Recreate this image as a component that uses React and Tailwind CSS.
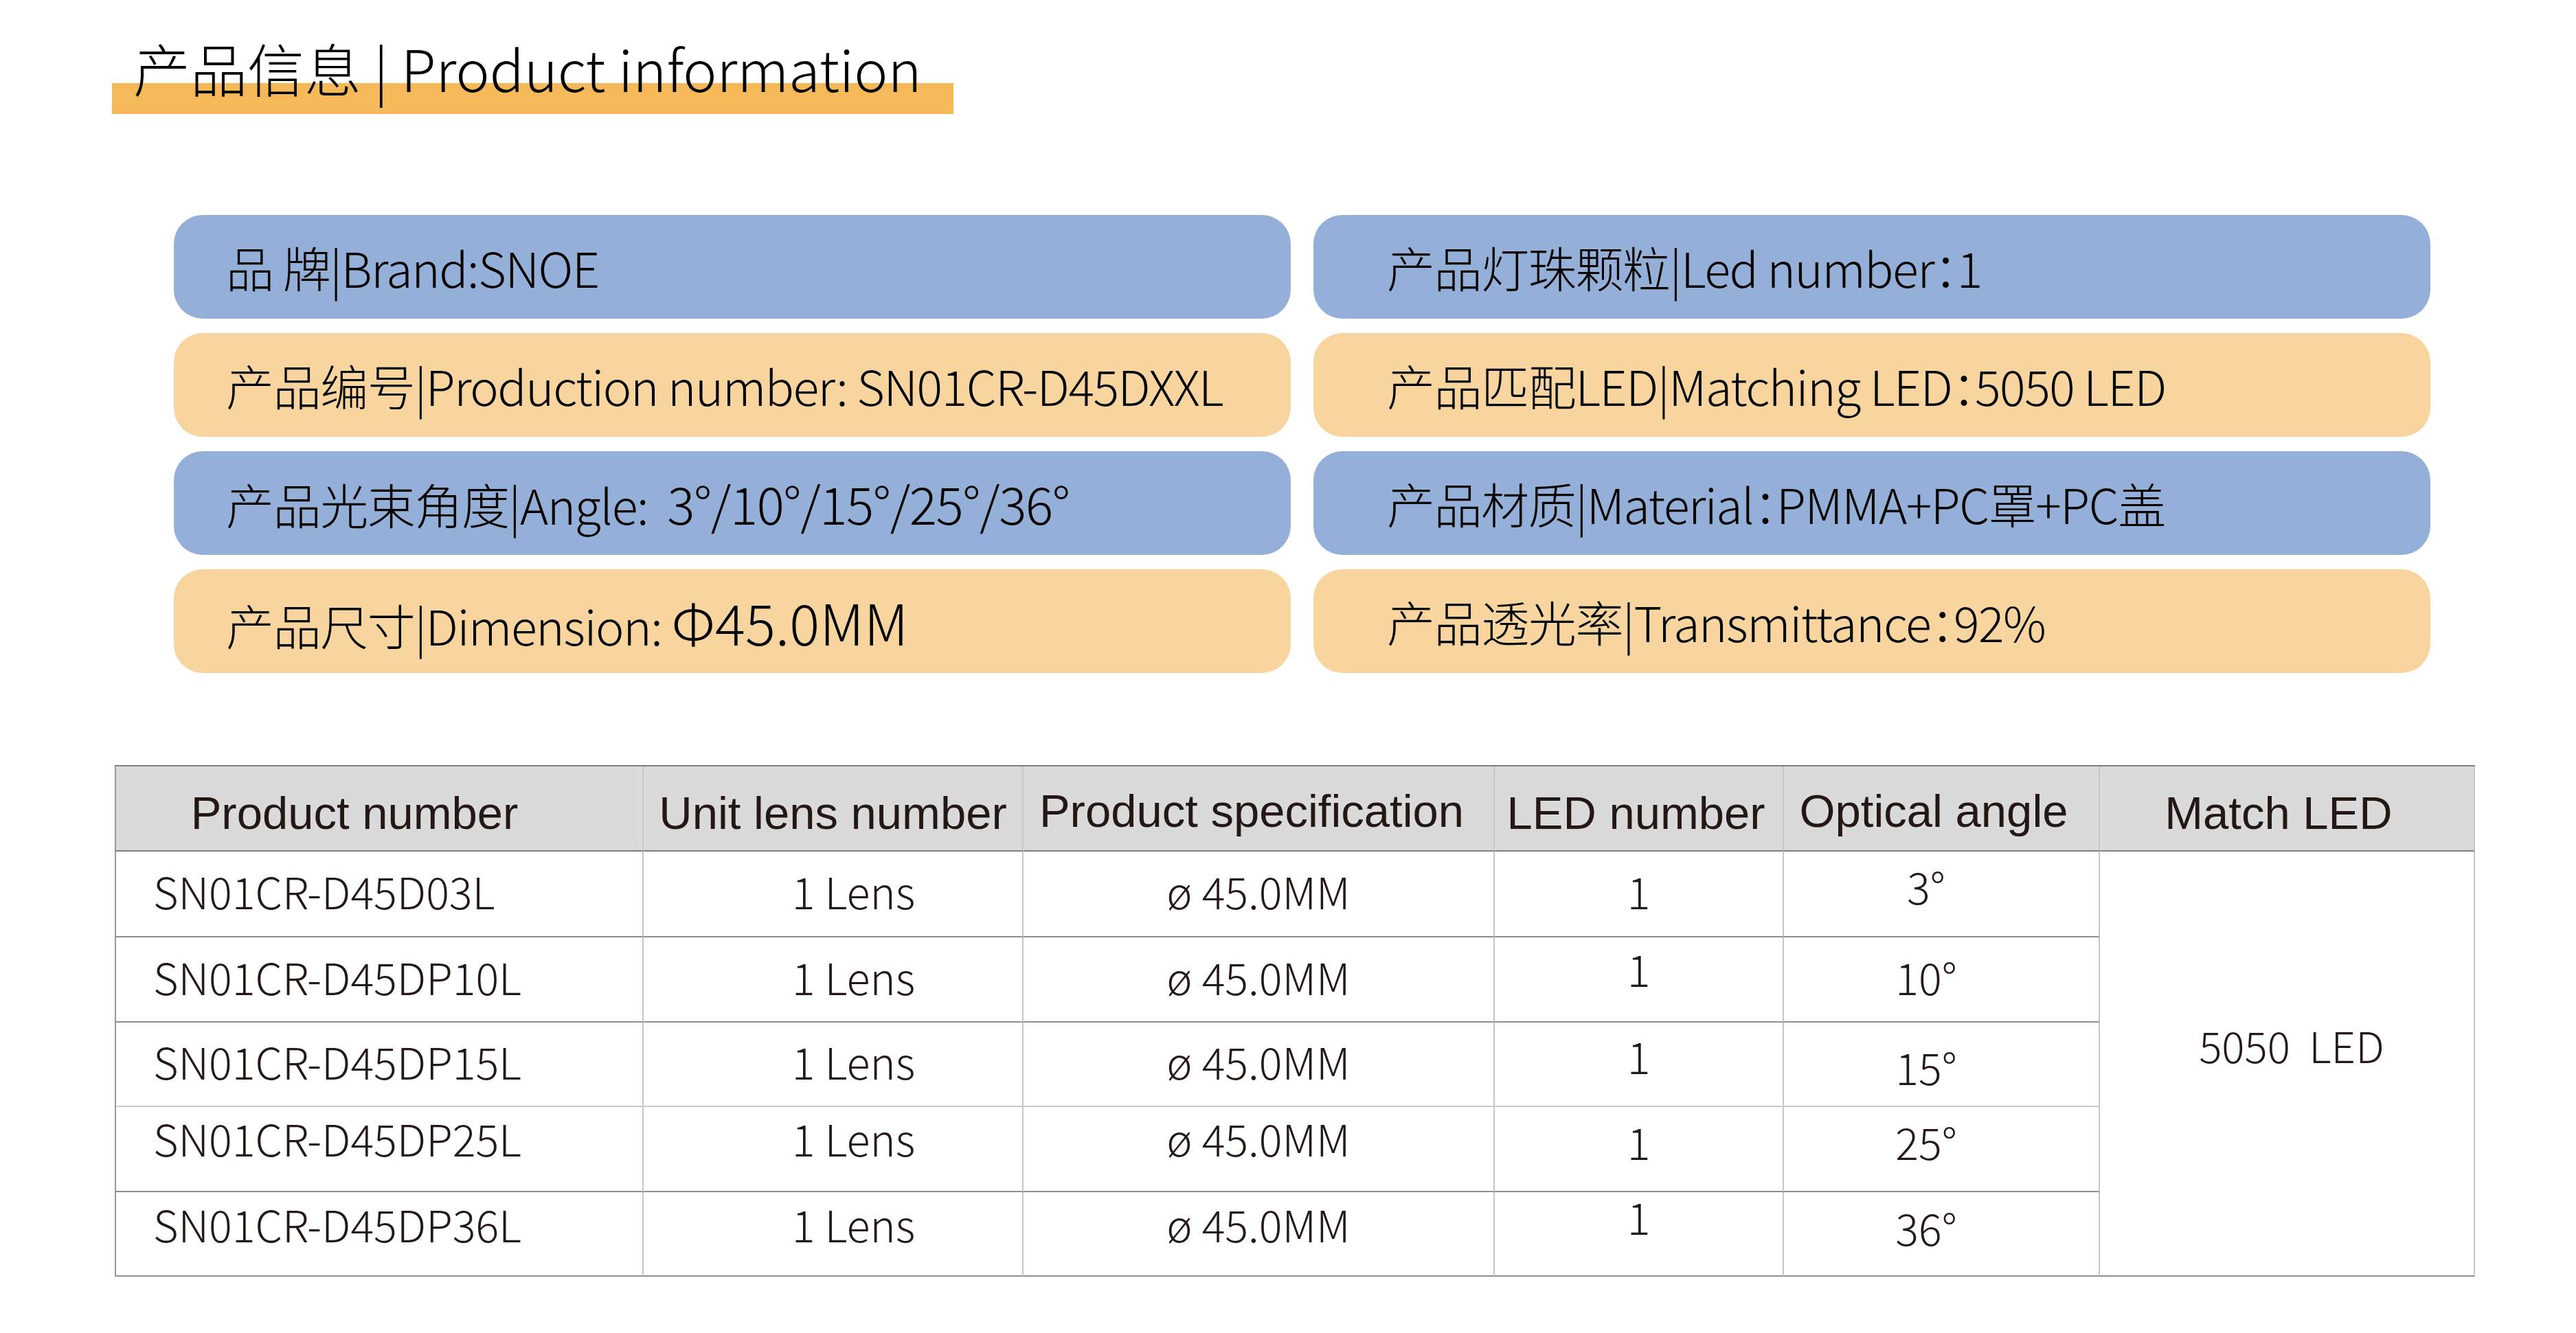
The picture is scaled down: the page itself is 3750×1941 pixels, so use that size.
import React from 'react';

const Colon = () => <span className="[font-feature-settings:'halt']">：</span>;

const pills = [
  {
    left: <>品 牌|Brand:SNOE</>,
    right: <>产品灯珠颗粒|Led number<Colon />1</>,
    tone: 'bg-[#94b0d8]',
  },
  {
    left: <>产品编号|Production number: SN01CR-D45DXXL</>,
    right: <>产品匹配LED|Matching LED<Colon />5050 LED</>,
    tone: 'bg-[#f8d59e]',
  },
  {
    left: <>产品光束角度|Angle:{'  '}<span className="text-[75px]">3°/10°/15°/25°/36°</span></>,
    right: <>产品材质|Material<Colon />PMMA+PC罩+PC盖</>,
    tone: 'bg-[#94b0d8]',
  },
  {
    left: <>产品尺寸|Dimension: <span className="text-[82px] tracking-normal">Φ45.0MM</span></>,
    right: <>产品透光率|Transmittance<Colon />92%</>,
    tone: 'bg-[#f8d59e]',
  },
];

const headers = [
  { label: 'Product number', cls: 'pr-[72px]' },
  { label: 'Unit lens number', cls: '' },
  { label: 'Product specification', cls: 'pr-[20px] pb-[6px]' },
  { label: 'LED number', cls: 'pr-[8px]' },
  { label: 'Optical angle', cls: 'pr-[22px] pb-[6px]' },
  { label: 'Match LED', cls: 'pr-[24px]' },
];

// per-row nudges copied from the print layout, which is not perfectly aligned
const rows = [
  { code: 'SN01CR-D45D03L', angle: '3°', base: 'pb-[8px]', led: 'pb-[8px]', ang: 'pb-[22px]', line: 'border-b-[#8f8f8f]' },
  { code: 'SN01CR-D45DP10L', angle: '10°', base: 'pb-[8px]', led: 'pb-[32px]', ang: 'pb-[8px]', line: 'border-b-[#8f8f8f]' },
  { code: 'SN01CR-D45DP15L', angle: '15°', base: 'pb-[8px]', led: 'pb-[24px]', ang: 'pt-[8px]', line: 'border-b-[#c9c9c9]' },
  { code: 'SN01CR-D45DP25L', angle: '25°', base: 'pb-[32px]', led: 'pb-[22px]', ang: 'pb-[22px]', line: 'border-b-[#8f8f8f]' },
  { code: 'SN01CR-D45DP36L', angle: '36°', base: 'pb-[28px]', led: 'pb-[50px]', ang: 'pb-[18px]', line: 'border-b-[#8f8f8f]' },
];

function Pill({ children, tone, side }) {
  return (
    <div
      className={`h-[151px] rounded-[42px] flex items-center ${tone} ${side === 'left' ? 'pl-[76px]' : 'pl-[107px]'}`}
    >
      <span className="text-[70px] tracking-[-0.02em] font-light whitespace-pre">{children}</span>
    </div>
  );
}

export default function App() {
  return (
    <div className="w-[3750px] h-[1941px] bg-white overflow-hidden text-black font-['Noto_Sans_CJK_SC','Noto_Sans',sans-serif]">
      <div className="pt-[48px] pl-[163px]">
        <h1 className="inline-block pl-[31px] pr-[46px] pb-[18px] text-[83px] leading-[100px] font-light bg-[linear-gradient(to_bottom,transparent_73px,#f5b95a_73px)]">
          产品信息 | Product information
        </h1>
      </div>

      <div className="ml-[253px] mt-[147px] w-max grid grid-cols-[1626px_1626px] gap-x-[33px] gap-y-[21px]">
        {pills.map((p, i) => (
          <React.Fragment key={i}>
            <Pill tone={p.tone} side="left">{p.left}</Pill>
            <Pill tone={p.tone} side="right">{p.right}</Pill>
          </React.Fragment>
        ))}
      </div>

      <div className="ml-[167px] mt-[134px] w-max grid grid-cols-[768px_553px_686px_421px_460px_546px] grid-rows-[124px_125px_124px_123px_124px_123px] border-t-2 border-l-2 border-t-[#7f7f7f] border-l-[#9a9a9a] text-[#231815]">
        {headers.map((h) => (
          <div
            key={h.label}
            className={`flex items-center justify-center bg-[#dadada] border-r-2 border-b-2 border-r-[#c6c6c6] border-b-[#7f7f7f] pt-[14px] font-['Liberation_Sans',Arial,sans-serif] text-[67px] whitespace-nowrap ${h.cls}`}
          >
            {h.label}
          </div>
        ))}

        {rows.map((r, i) => (
          <React.Fragment key={r.code}>
            <div className={`flex items-center pl-[54px] border-r-2 border-b-2 border-r-[#c6c6c6] ${r.line} text-[63px] font-light ${r.base}`}>
              {r.code}
            </div>
            <div className={`flex items-center justify-center pl-[60px] border-r-2 border-b-2 border-r-[#c6c6c6] ${r.line} text-[63px] font-light ${r.base}`}>
              1 Lens
            </div>
            <div className={`flex items-center justify-center border-r-2 border-b-2 border-r-[#c6c6c6] ${r.line} text-[63px] font-light ${r.base}`}>
              ø 45.0MM
            </div>
            <div className={`flex items-center justify-center border-r-2 border-b-2 border-r-[#c6c6c6] ${r.line} text-[63px] font-light ${r.led}`}>
              1
            </div>
            <div className={`flex items-center justify-center pr-[44px] border-r-2 border-b-2 border-r-[#c6c6c6] ${r.line} text-[63px] font-light ${r.ang}`}>
              {r.angle}
            </div>
            {i === 0 && (
              <div className="col-start-6 row-start-2 row-span-5 flex items-center justify-center pl-[14px] pb-[54px] border-r-2 border-b-2 border-r-[#c6c6c6] border-b-[#8f8f8f] text-[62px] font-light whitespace-pre">
                {'5050  LED'}
              </div>
            )}
          </React.Fragment>
        ))}
      </div>
    </div>
  );
}
